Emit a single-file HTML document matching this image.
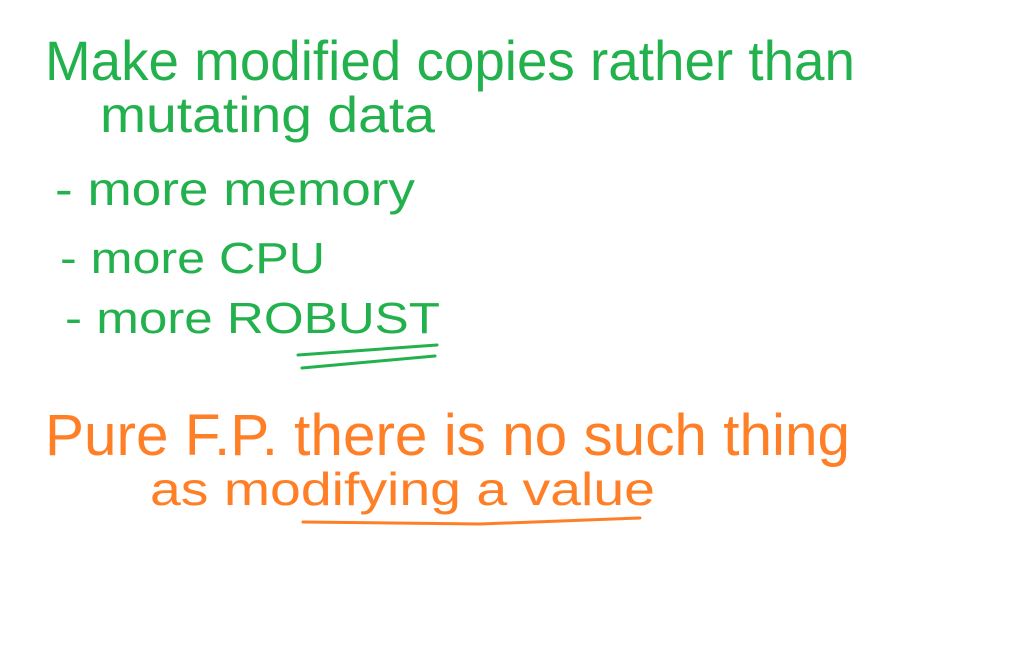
<!DOCTYPE html>
<html><head><meta charset="utf-8"><style>
html,body{margin:0;padding:0;background:#fff;width:1013px;height:672px;overflow:hidden}
svg{display:block}
text{font-family:"Liberation Sans",sans-serif;font-weight:normal}
.g{fill:#22b14c}.o{fill:#ff7f27}
</style></head><body>
<svg width="1013" height="672" viewBox="0 0 1013 672">
<text class="g" x="45" y="80" font-size="56" textLength="810" lengthAdjust="spacingAndGlyphs">Make modified copies rather than</text>
<text class="g" x="100" y="132" font-size="50" textLength="335" lengthAdjust="spacingAndGlyphs">mutating data</text>
<text class="g" x="55" y="205" font-size="46" textLength="360" lengthAdjust="spacingAndGlyphs">- more memory</text>
<text class="g" x="60" y="273" font-size="44" textLength="265" lengthAdjust="spacingAndGlyphs">- more CPU</text>
<text class="g" x="65" y="333" font-size="44" textLength="375" lengthAdjust="spacingAndGlyphs">- more ROBUST</text>
<path d="M298 355 L437 345 M302 368 L435 356" stroke="#22b14c" stroke-width="3" fill="none" stroke-linecap="round"/>
<text class="o" x="45" y="455" font-size="58" textLength="805" lengthAdjust="spacingAndGlyphs">Pure F.P.  there is no such thing</text>
<text class="o" x="150" y="505" font-size="46" textLength="505" lengthAdjust="spacingAndGlyphs">as modifying a value</text>
<path d="M303 522 L480 524 L640 518" stroke="#ff7f27" stroke-width="3" fill="none" stroke-linecap="round"/>
</svg>
</body></html>
